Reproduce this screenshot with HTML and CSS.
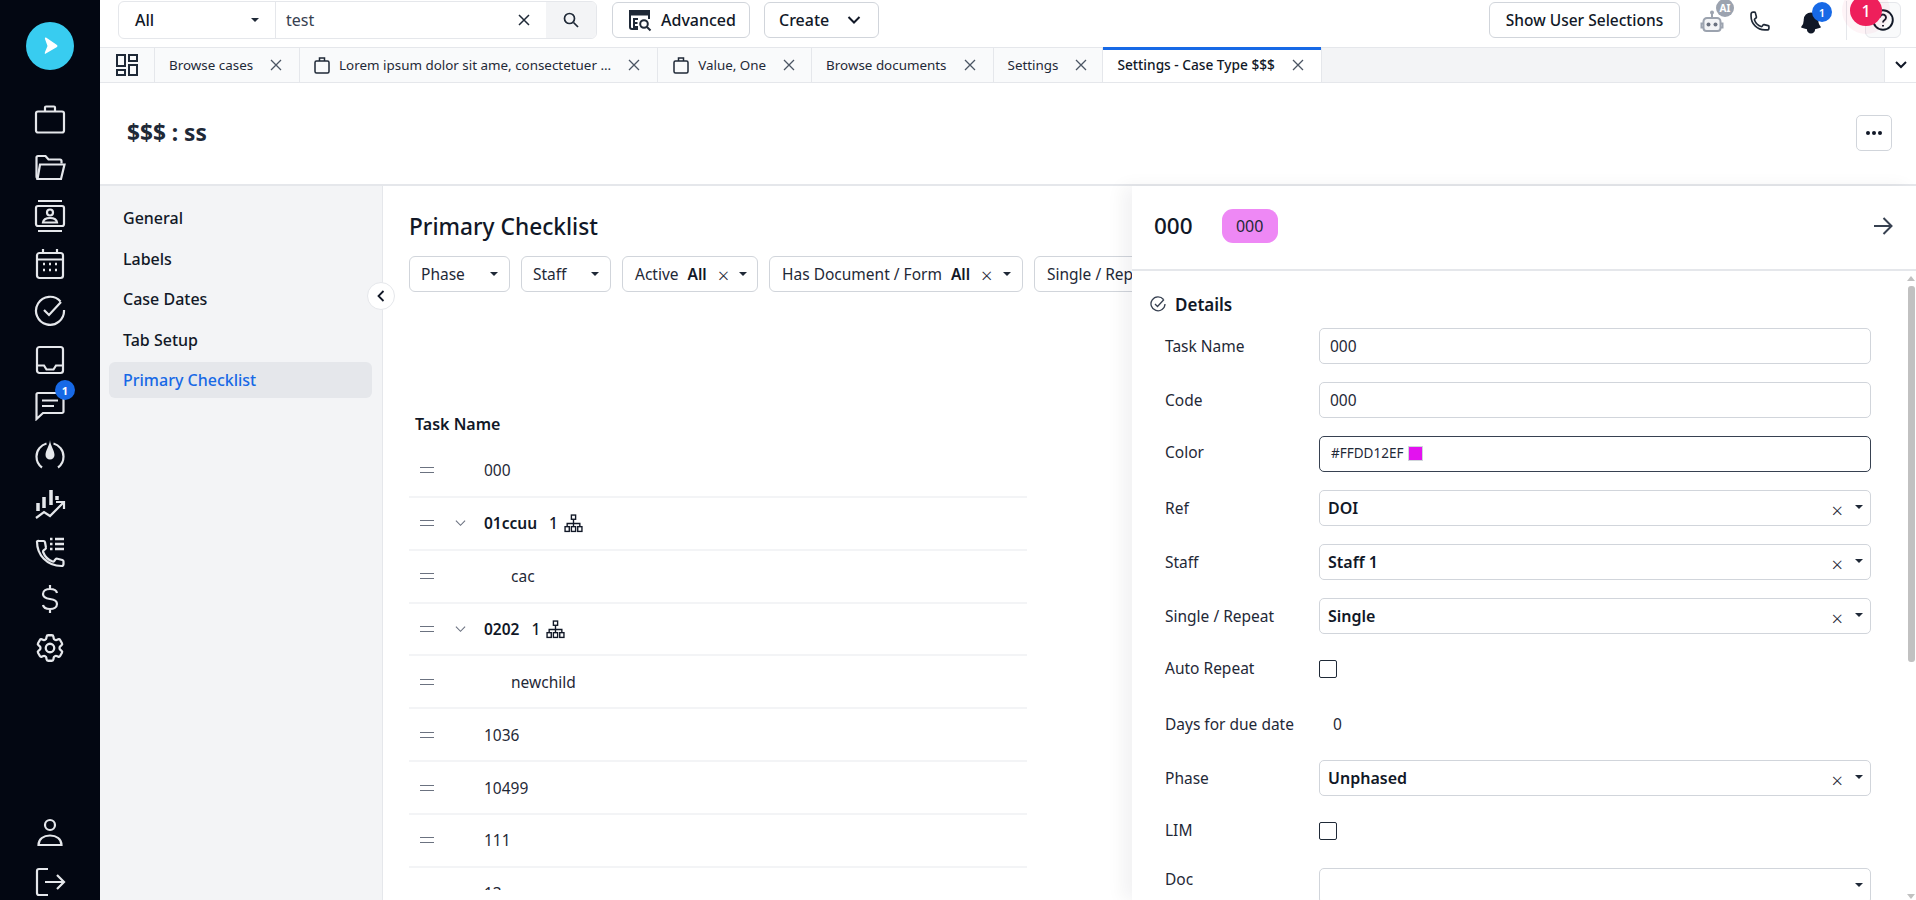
FILE: index.html
```html
<!DOCTYPE html>
<html lang="en">
<head>
<meta charset="utf-8">
<title>Settings - Case Type</title>
<link rel="stylesheet" href="styles.css">
</head>
<body>
<div class="app">
  <nav class="rail">
    <div class="rail-logo"><svg width="48" height="48" viewBox="0 0 48 48"><circle cx="24" cy="24" r="24" fill="#38ccf0"/><path d="M20 15.500 L31 23 Q32 24 31 25 L19 32 Q18.500 32 19 30 L21.500 24 L19 17 Q18.500 15 20 15.500Z" fill="#fff"/></svg></div>
    <div class="rail-top">
      <a class="rail-item"><svg class="ri" viewBox="0 0 32 32"><rect x="2" y="7.500" width="28" height="21" rx="2"/><path d="M11 7V3.500a1 1 0 0 1 1-1h8a1 1 0 0 1 1 1V7"/></svg></a>
      <a class="rail-item"><svg class="ri" viewBox="0 0 32 32"><path d="M5 27a2.500 2.500 0 0 1-2.500-2.500V5.500A1.500 1.500 0 0 1 4 4h7.500l3 3.500H26a1.500 1.500 0 0 1 1.500 1.500v2.500"/><path d="M6 12.500h24.500L27 27H3.500z"/></svg></a>
      <a class="rail-item"><svg class="ri" viewBox="0 0 32 32"><path d="M4 1h24M4 31h24"/><rect x="2" y="6" width="28" height="20" rx="2"/><circle cx="16" cy="12.500" r="3"/><path d="M9 22.500c.5-3.500 3-4.500 7-4.500s6.500 1 7 4.500z" /></svg></a>
      <a class="rail-item"><svg class="ri" viewBox="0 0 32 32"><rect x="3" y="5" width="26" height="25" rx="2.500"/><path d="M3 11.500h26M9 1v5M23 1v5"/><path class="dots" d="M9 16h2M15 16h2M21 16h2M9 22h2M15 22h2M21 22h2"/></svg></a>
      <a class="rail-item rail-up"><svg class="ri" viewBox="0 0 32 32"><path d="M26.500 7.500A14 14 0 1 0 30 16"/><path d="M10 16l5 5L27 8"/></svg></a>
      <a class="rail-item"><svg class="ri" viewBox="0 0 32 32"><rect x="3" y="3" width="26" height="26" rx="2.500"/><path d="M3 21.500h7l2.500 4h7l2.500-4h7"/></svg></a>
      <a class="rail-item rail-chat"><svg class="ri" viewBox="0 0 32 32"><path d="M4 4h24a1.500 1.500 0 0 1 1.500 1.500v17a1.500 1.500 0 0 1-1.500 1.500H9l-6.500 6V5.500A1.500 1.500 0 0 1 4 4z"/><path d="M8 11.500h16M8 17h12"/></svg><span class="rail-badge">1</span></a>
      <a class="rail-item rail-gauge"><svg class="ri" viewBox="0 0 32 32"><path d="M8 28.500C4.500 26 2.500 22 2.500 17.500 2.500 11 7 6 12.500 4.500M24 28.500c3.500-2.500 5.500-6.500 5.500-11C29.500 11 25 6 19.500 4.500"/><path class="fill" d="M16 1c.5 6 4.500 10 4.500 15a4.500 4.500 0 0 1-9 0C11.500 11 15.500 7 16 1z"/></svg></a>
      <a class="rail-item"><svg class="ri" viewBox="0 0 32 32"><path d="M4 15v8M10 9v11M17 2v15M23 8v4" stroke-width="3.500"/><path d="M2 30l8-6 6 4 13-13"/><path d="M22 14h8v7"/></svg></a>
      <a class="rail-item"><svg class="ri" viewBox="0 0 32 32"><path d="M3 5.500C3 19 13 30 27.500 30a2 2 0 0 0 2-2v-2.500a1.500 1.500 0 0 0-1.100-1.500l-5-1.300a2 2 0 0 0-2 .7l-1.200 1.600c-.4.500-1 .7-1.600.5-4.800-1.700-7.800-5-9.500-9.500-.2-.6 0-1.200.5-1.600l1.600-1.200a2 2 0 0 0 .7-2L11 6.200A1.500 1.500 0 0 0 9.500 5H5a2 2 0 0 0-2 .5z"/><path d="M16 3h2.500M16 8h2.500M16 13h2.500M21 3h9M21 8h9M21 13h9" stroke-width="2.500"/></svg></a>
      <a class="rail-item rail-dollar"><svg class="ri" viewBox="0 0 32 32"><path d="M16 2v4M16 26v4M23 10c-.5-2.500-3.500-4-7-4s-7 1.700-7 5 3 4.500 7 5 7 1.700 7 5-3.500 5-7 5-6.500-1.500-7-4"/></svg></a>
      <a class="rail-item"><svg class="ri ri-gear" viewBox="0 0 24 24"><path d="M9.594 3.940c.09-.542.56-.94 1.110-.94h2.593c.55 0 1.020.398 1.110.94l.213 1.281c.063.374.313.686.645.870.074.04.147.083.22.127.325.196.72.257 1.075.124l1.217-.456a1.125 1.125 0 0 1 1.370.49l1.296 2.247a1.125 1.125 0 0 1-.26 1.431l-1.003.827c-.293.241-.438.613-.43.992a7.723 7.723 0 0 1 0 .255c-.008.378.137.75.43.991l1.004.827c.424.35.534.955.26 1.430l-1.298 2.247a1.125 1.125 0 0 1-1.369.491l-1.217-.456c-.355-.133-.75-.072-1.076.124a6.470 6.470 0 0 1-.22.128c-.331.183-.581.495-.644.869l-.213 1.281c-.09.543-.56.94-1.110.94h-2.594c-.55 0-1.019-.398-1.110-.94l-.213-1.281c-.062-.374-.312-.686-.644-.870a6.520 6.520 0 0 1-.22-.127c-.325-.196-.72-.257-1.076-.124l-1.217.456a1.125 1.125 0 0 1-1.369-.49l-1.297-2.247a1.125 1.125 0 0 1 .26-1.431l1.004-.827c.292-.24.437-.613.43-.991a6.932 6.932 0 0 1 0-.255c.007-.38-.138-.751-.43-.992l-1.004-.827a1.125 1.125 0 0 1-.26-1.430l1.297-2.247a1.125 1.125 0 0 1 1.370-.491l1.216.456c.356.133.751.072 1.076-.124.072-.044.146-.086.22-.128.332-.183.582-.495.644-.869l.214-1.280Z"/><circle cx="12" cy="12" r="3"/></svg></a>
    </div>
    <div class="rail-bottom">
      <a class="rail-item-sm"><svg class="ri" viewBox="0 0 32 32"><circle cx="16" cy="8" r="5"/><path d="M4.500 28c0-6 5-9.500 11.500-9.500S27.500 22 27.500 28z"/></svg></a>
      <a class="rail-item-sm"><svg class="ri" viewBox="0 0 32 32"><path d="M14 3H5a2 2 0 0 0-2 2v22a2 2 0 0 0 2 2h9"/><path d="M11 16h19M23 9l7 7-7 7"/></svg></a>
    </div>
  </nav>

  <div class="main">
    <header class="topbar">
      <div class="search">
        <div class="search-scope"><span>All</span><i class="caret"></i></div>
        <div class="search-input"><span>test</span><svg class="ic-x" viewBox="0 0 12 12"><path d="M1 1l10 10M11 1L1 11"/></svg></div>
        <div class="search-go"><svg width="18" height="18" viewBox="0 0 18 18" fill="none" stroke="#1f2937" stroke-width="1.700"><circle cx="7.500" cy="7.500" r="5"/><path d="M11.500 11.500L16 16"/></svg></div>
      </div>
      <button class="btn btn-adv"><svg width="24" height="24" viewBox="0 0 24 24" fill="none" stroke="#1f2937" stroke-width="2"><path d="M10 21H4a2 2 0 0 1-2-2V3h19v8"/><path d="M2 5.500h19" stroke-width="4"/><path d="M10 11H6v8h4M6 15h3.500"/><circle cx="16" cy="16" r="3.800"/><path d="M19 19l3.500 3.500"/></svg><span>Advanced</span></button>
      <button class="btn btn-create"><span>Create</span><svg width="14" height="10" viewBox="0 0 14 10" fill="none" stroke="#111827" stroke-width="2"><path d="M1.500 2l5.500 5.500L12.500 2"/></svg></button>
      <div class="topbar-right">
        <button class="btn btn-user">Show User Selections</button>
        <span class="ti ti-robot"><svg width="24" height="23" viewBox="0 0 24 23"><circle cx="12" cy="2.500" r="2" fill="#9ca3af"/><path d="M12 4v4" stroke="#9ca3af" stroke-width="2"/><path d="M7 8h10a3.500 3.500 0 0 1 3.500 3.500V18a3 3 0 0 1-3 3h-11a3 3 0 0 1-3-3v-6.500A3.500 3.500 0 0 1 7 8z" fill="#f3f4f6" stroke="#9ca3af" stroke-width="2"/><path d="M3 13.500H1.500v4H3M21 13.500h1.500v4H21" fill="none" stroke="#9ca3af" stroke-width="2"/><circle cx="8.500" cy="14.500" r="2" fill="#6b7280"/><circle cx="15.500" cy="14.500" r="2" fill="#6b7280"/></svg><b class="ai">AI</b></span>
        <span class="ti ti-phone"><svg width="22" height="22" viewBox="0 0 24 24" fill="none" stroke="#1f2937" stroke-width="1.800"><path d="M2.250 6.750c0 8.284 6.716 15 15 15h2.250a2.250 2.250 0 0 0 2.250-2.250v-1.372c0-.516-.351-.966-.852-1.091l-4.423-1.106c-.44-.11-.902.055-1.173.417l-.97 1.293c-.282.376-.769.542-1.210.38a12.035 12.035 0 0 1-7.143-7.143c-.162-.441.004-.928.38-1.210l1.293-.97c.363-.271.527-.734.417-1.173L6.963 3.102a1.125 1.125 0 0 0-1.091-.852H4.500A2.250 2.250 0 0 0 2.250 4.500v2.250Z"/></svg></span>
        <span class="ti ti-bell"><svg width="26" height="26" viewBox="0 0 24 24" fill="#111827"><path d="M5.250 9a6.750 6.750 0 0 1 13.500 0v.75c0 2.123.8 4.057 2.118 5.520a.75.75 0 0 1-.297 1.206c-1.544.57-3.160.99-4.831 1.243a3.750 3.750 0 1 1-7.480 0 24.585 24.585 0 0 1-4.831-1.244.75.75 0 0 1-.298-1.205A8.217 8.217 0 0 0 5.250 9.750V9Z"/></svg><b class="bell-badge">1</b></span>
        <span class="tb-divider"></span>
        <button class="help"><svg width="24" height="24" viewBox="0 0 24 24" fill="none" stroke="#111827" stroke-width="1.900"><circle cx="12" cy="12" r="9.800"/><path d="M9 9.500a3 3 0 1 1 4.600 2.500c-1 .7-1.600 1.300-1.600 2.500"/><path d="M12 17v1.500"/></svg><b class="help-badge">1</b></button>
      </div>
    </header>

    <div class="tabs">
      <div class="tab-grid"><svg width="22" height="22" viewBox="0 0 22 22" fill="none" stroke="#1f2937" stroke-width="2"><rect x="1" y="1" width="8" height="11"/><rect x="13" y="1" width="8" height="6"/><rect x="1" y="16" width="8" height="5"/><rect x="13" y="11" width="8" height="10"/></svg></div>
      <div class="tab"><span>Browse cases</span><svg class="ic-x tx" viewBox="0 0 12 12"><path d="M1 1l10 10M11 1L1 11"/></svg></div>
      <div class="tab tab-long"><svg class="bag" width="16" height="18" viewBox="0 0 16 18"><rect x="1" y="5" width="14" height="12" rx="1.500"/><path d="M5.500 5V2h5v3"/></svg><span>Lorem ipsum dolor sit ame, consectetuer ...</span><svg class="ic-x tx" viewBox="0 0 12 12"><path d="M1 1l10 10M11 1L1 11"/></svg></div>
      <div class="tab tab-value"><svg class="bag" width="16" height="18" viewBox="0 0 16 18"><rect x="1" y="5" width="14" height="12" rx="1.500"/><path d="M5.500 5V2h5v3"/></svg><span>Value, One</span><svg class="ic-x tx" viewBox="0 0 12 12"><path d="M1 1l10 10M11 1L1 11"/></svg></div>
      <div class="tab"><span>Browse documents</span><svg class="ic-x tx" viewBox="0 0 12 12"><path d="M1 1l10 10M11 1L1 11"/></svg></div>
      <div class="tab tab-settings"><span>Settings</span><svg class="ic-x tx" viewBox="0 0 12 12"><path d="M1 1l10 10M11 1L1 11"/></svg></div>
      <div class="tab tab-active"><span>Settings - Case Type $$$</span><svg class="ic-x tx" viewBox="0 0 12 12"><path d="M1 1l10 10M11 1L1 11"/></svg></div>
      <div class="tabs-more"><svg width="14" height="10" viewBox="0 0 14 10" fill="none" stroke="#111827" stroke-width="2"><path d="M2 2l5 5 5-5"/></svg></div>
    </div>

    <div class="page-head">
      <h1>$$$ : ss</h1>
      <button class="dots-btn"><i></i><i></i><i></i></button>
    </div>

    <div class="page-body">
      <aside class="side">
        <a class="side-item">General</a>
        <a class="side-item">Labels</a>
        <a class="side-item">Case Dates</a>
        <a class="side-item">Tab Setup</a>
        <a class="side-item side-active">Primary Checklist</a>
        <button class="collapse"><svg width="8" height="12" viewBox="0 0 8 12" fill="none" stroke="#111827" stroke-width="1.800"><path d="M6.500 1L1.500 6l5 5"/></svg></button>
      </aside>

      <section class="content">
        <h2>Primary Checklist</h2>
        <div class="filters">
          <div class="filter f-phase"><span>Phase</span><i class="caret"></i></div>
          <div class="filter f-staff"><span>Staff</span><i class="caret"></i></div>
          <div class="filter f-active"><span>Active</span><b>All</b><em class="xx">×</em><i class="caret"></i></div>
          <div class="filter f-doc"><span>Has Document / Form</span><b>All</b><em class="xx">×</em><i class="caret"></i></div>
          <div class="filter f-single"><span>Single / Repeat</span><i class="caret"></i></div>
        </div>
        <div class="th">Task Name</div>
        <div class="rows">
          <div class="row"><i class="drag"></i><span class="lead"></span><span>000</span></div>
          <div class="row row-b"><i class="drag"></i><svg class="chev" viewBox="0 0 12 8"><path d="M1 1.500l5 5 5-5"/></svg><span>01ccuu</span><span class="cnt">1</span><svg class="tree" viewBox="0 0 18 18"><rect x="7" y="1" width="4" height="4"/><path d="M9 5v4M3 12V9h12v3M9 9v3"/><rect x="1" y="12" width="4" height="4.500"/><rect x="7" y="12" width="4" height="4.500"/><rect x="13" y="12" width="4" height="4.500"/></svg></div>
          <div class="row"><i class="drag"></i><span class="lead lead-c"></span><span>cac</span></div>
          <div class="row row-b"><i class="drag"></i><svg class="chev" viewBox="0 0 12 8"><path d="M1 1.500l5 5 5-5"/></svg><span>0202</span><span class="cnt">1</span><svg class="tree" viewBox="0 0 18 18"><rect x="7" y="1" width="4" height="4"/><path d="M9 5v4M3 12V9h12v3M9 9v3"/><rect x="1" y="12" width="4" height="4.500"/><rect x="7" y="12" width="4" height="4.500"/><rect x="13" y="12" width="4" height="4.500"/></svg></div>
          <div class="row"><i class="drag"></i><span class="lead lead-c"></span><span>newchild</span></div>
          <div class="row"><i class="drag"></i><span class="lead"></span><span>1036</span></div>
          <div class="row"><i class="drag"></i><span class="lead"></span><span>10499</span></div>
          <div class="row"><i class="drag"></i><span class="lead"></span><span>111</span></div>
          <div class="row"><i class="drag"></i><span class="lead"></span><span>13</span></div>
        </div>
      </section>
    </div>

    <aside class="panel">
      <div class="panel-head">
        <span class="panel-title">000</span>
        <span class="chip">000</span>
        <svg class="panel-arrow" width="20" height="18" viewBox="0 0 20 18" fill="none" stroke="#374151" stroke-width="2"><path d="M1 9h17M10.500 1L18.500 9l-8 8"/></svg>
      </div>
      <div class="panel-body">
        <div class="details-head"><svg width="16" height="16" viewBox="0 0 16 16" fill="none" stroke="#374151" stroke-width="1.300"><path d="M13.500 3.500A7 7 0 1 0 15 8"/><path d="M5 8l2.500 2.500L14 3.500"/></svg><span>Details</span></div>
        <div class="form">
          <label class="f-label">Task Name</label><div class="ctl">000</div>
          <label class="f-label">Code</label><div class="ctl">000</div>
          <label class="f-label f-up">Color</label><div class="ctl ctl-color"><span>#FFDD12EF</span><i class="swatch"></i></div>
          <label class="f-label">Ref</label><div class="ctl ctl-sel"><b>DOI</b><em class="xx">×</em><i class="caret"></i></div>
          <label class="f-label">Staff</label><div class="ctl ctl-sel"><b>Staff 1</b><em class="xx">×</em><i class="caret"></i></div>
          <label class="f-label">Single / Repeat</label><div class="ctl ctl-sel"><b>Single</b><em class="xx">×</em><i class="caret"></i></div>
          <label class="f-label f-up">Auto Repeat</label><div class="ctl-plain"><i class="check"></i></div>
          <label class="f-label">Days for due date</label><div class="ctl-plain ctl-days">0</div>
          <label class="f-label">Phase</label><div class="ctl ctl-sel"><b>Unphased</b><em class="xx">×</em><i class="caret"></i></div>
          <label class="f-label f-up">LIM</label><div class="ctl-plain"><i class="check"></i></div>
          <label class="f-label f-doc-label">Doc</label><div class="ctl ctl-sel"><b></b><i class="caret"></i></div>
        </div>
      </div>
      <div class="scrollbar"><i class="sb-up"></i><i class="sb-thumb"></i><i class="sb-down"></i></div>
    </aside>
  </div>
</div>
</body>
</html>
```

FILE: styles.css
```css
* { box-sizing: border-box; }
html, body { margin: 0; height: 100%; overflow: hidden; }
body { font-family: "Noto Sans", "Open Sans", sans-serif; font-size: 15.500px; color: #111827; background: #fff; }
button { font: inherit; color: inherit; background: #fff; cursor: pointer; }
em { font-style: normal; }
.app { display: flex; width: 1916px; height: 900px; overflow: hidden; }

/* rail */
.rail { width: 100px; flex: none; background: #030712; display: flex; flex-direction: column; align-items: center; padding-top: 22px; }
.rail-logo { height: 48px; margin-bottom: 26px; }
.rail-top { display: flex; flex-direction: column; }
.rail-item { height: 48px; width: 48px; display: flex; align-items: center; justify-content: center; position: relative; }
.rail-up { padding-bottom: 5px; }
.rail-chat { padding-bottom: 6px; }
.rail-gauge { padding-bottom: 2px; }
.rail-dollar { padding-bottom: 2px; }
.rail-bottom { margin-top: auto; display: flex; flex-direction: column; gap: 13px; }
.rail-item-sm { height: 36px; width: 48px; display: flex; align-items: center; justify-content: center; }
.ri { width: 32px; height: 32px; fill: none; stroke: #e5e7eb; stroke-width: 2.200; }
.ri .dots { stroke-width: 2.400; }
.ri .fill { fill: #e5e7eb; stroke: none; }
.ri-gear { stroke-width: 1.600; width: 34px; height: 34px; }
.rail-badge { position: absolute; left: 29px; top: -4px; width: 20px; height: 20px; border-radius: 50%; background: #1769e6; color: #fff; font-size: 11px; font-weight: 700; display: flex; align-items: center; justify-content: center; }

/* main */
.main { flex: 1; min-width: 0; position: relative; display: flex; flex-direction: column; }

/* topbar */
.topbar { height: 47px; flex: none; display: flex; align-items: flex-start; padding: 1px 15px 0 18px; font-size: 16px; }
.search { display: flex; width: 479px; height: 38px; border: 1px solid #e5e7eb; border-radius: 6px; overflow: hidden; }
.search-scope { width: 157px; display: flex; align-items: center; justify-content: space-between; padding: 0 16px 0 16px; border-right: 1px solid #e5e7eb; font-weight: 500; }
.search-input { flex: 1; display: flex; align-items: center; justify-content: space-between; padding: 0 16px 0 10px; color: #374151; }
.search-go { width: 50px; background: #f3f4f6; display: flex; align-items: center; justify-content: center; }
.ic-x { width: 12px; height: 12px; fill: none; stroke: #1f2937; stroke-width: 1.500; }
.caret { display: inline-block; width: 0; height: 0; border-left: 4px solid transparent; border-right: 4px solid transparent; border-top: 4px solid #1f2937; flex: none; }
.btn { height: 36px; margin-top: 1px; border: 1px solid #d1d5db; border-radius: 6px; display: flex; align-items: center; padding: 0; font-weight: 500; }
.btn-adv { width: 138px; margin-left: 15px; padding-left: 15px; gap: 9px; }
.btn-create { width: 115px; margin-left: 14px; padding-left: 14px; gap: 18px; }
.topbar-right { margin-left: auto; display: flex; align-items: flex-start; position: relative; }
.btn-user { width: 191px; justify-content: center; font-size: 15.500px; }
.ti { position: relative; display: block; margin-top: 9px; }
.ti svg { display: block; }
.ti-robot { margin-left: 20px; }
.ai { position: absolute; left: 16px; top: -11px; width: 18px; height: 18px; border-radius: 50%; background: #9ca3af; color: #fff; font-size: 10px; display: flex; align-items: center; justify-content: center; }
.ti-phone { margin-left: 25px; }
.ti-bell { margin-left: 27px; }
.bell-badge { position: absolute; left: 14px; top: -8px; width: 20px; height: 20px; border-radius: 50%; background: #1769e6; color: #fff; font-size: 11px; display: flex; align-items: center; justify-content: center; font-weight: 600; }
.tb-divider { width: 1px; height: 39px; background: #e5e7eb; margin-left: 22px; }
.help { width: 36px; height: 36px; margin: 1px 0 0 18px; border: 1px solid #e5e7eb; border-radius: 6px; background: #f9fafb; padding: 0; position: relative; display: flex; align-items: center; justify-content: center; }
.help-badge { position: absolute; left: -16px; top: -8px; width: 32px; height: 31px; border-radius: 50%; background: #ee1f5b; color: #fff; font-size: 16px; font-weight: 500; display: flex; align-items: center; justify-content: center; box-shadow: 0 0 0 8px rgba(238, 31, 91, .05); }

/* tabs */
.tabs { height: 36px; flex: none; display: flex; background: #f3f4f6; border-top: 1px solid #e5e7eb; border-bottom: 1px solid #e5e7eb; font-size: 13.400px; color: #1f2937; }
.tab-grid { width: 55px; display: flex; align-items: center; justify-content: center; background: #f9fafb; border-right: 1px solid #e5e7eb; }
.tab { display: flex; align-items: center; padding: 0 17px 0 14px; background: #f9fafb; border-right: 1px solid #e5e7eb; white-space: nowrap; }
.tab-value { padding-left: 15px; padding-right: 16px; }
.tab-settings { padding-right: 15px; }
.tx { margin-left: 17px; stroke: #4b5563; stroke-width: 1.300; }
.bag { margin-right: 9px; fill: none; stroke: #1f2937; stroke-width: 1.500; }
.tab-active { background: #fff; box-shadow: inset 0 3px 0 #1769e6; margin-top: -1px; font-weight: 500; color: #111827; font-size: 13.700px; }
.tabs-more { margin-left: auto; width: 32px; background: #fff; border-left: 1px solid #e5e7eb; display: flex; align-items: center; justify-content: center; }

/* page head */
.page-head { height: 103px; flex: none; display: flex; align-items: center; justify-content: space-between; padding: 0 24px 2px 27px; border-bottom: 2px solid #e5e7eb; }
.page-head h1 { margin: 0; font-size: 22.700px; font-weight: 700; color: #1f2937; }
.dots-btn { width: 36px; height: 36px; border: 1px solid #d1d5db; border-radius: 5px; display: flex; gap: 2px; align-items: center; justify-content: center; padding: 0; }
.dots-btn i { width: 4px; height: 4px; border-radius: 50%; background: #111827; }

/* body */
.page-body { flex: 1; min-height: 0; display: flex; }
.side { width: 283px; flex: none; background: #f3f4f6; border-right: 1px solid #e5e7eb; padding: 12px 10px 0 9px; position: relative; font-size: 16px; }
.side-item { display: flex; align-items: center; height: 40.500px; padding-left: 14px; font-weight: 500; color: #111827; }
.side-active { height: 36px; margin-top: 2px; background: #e5e7eb; border-radius: 6px; color: #1769e6; }
.collapse { position: absolute; right: -13px; top: 96px; width: 28px; height: 28px; border-radius: 50%; border: 1px solid #e5e7eb; padding: 0; display: flex; align-items: center; justify-content: center; z-index: 2; }

.content { flex: 1; min-width: 0; padding: 25px 0 0 26px; height: 704px; overflow: hidden; }
.content h2 { margin: 0; font-size: 22.700px; line-height: 32px; font-weight: 500; color: #111827; }
.filters { display: flex; gap: 11px; margin-top: 13px; white-space: nowrap; }
.filter { height: 36px; border: 1px solid #d1d5db; border-radius: 6px; display: flex; align-items: center; padding: 0 11px 0 12px; color: #1f2937; }
.filter b { font-weight: 600; color: #111827; margin-left: 9px; }
.filter .xx { margin-left: 11px; top: 2px; }
.filter .caret { margin-left: 10px; }
.f-phase { width: 101px; justify-content: space-between; padding-left: 11px; }
.f-staff { width: 90px; justify-content: space-between; padding-left: 11px; }
.f-active { width: 136px; }
.f-doc { width: 254px; }
.f-single { width: 150px; justify-content: space-between; }
.xx { font-size: 20px; line-height: 1; color: #1f2937; position: relative; top: 3px; font-weight: 300; }
.th { margin: 122px 0 0 6px; height: 21px; line-height: 21px; font-weight: 600; font-size: 16px; color: #111827; }
.rows { width: 618px; margin-top: 10px; }
.row { height: 52.860px; border-bottom: 2px solid #f3f4f6; display: flex; align-items: center; padding-left: 11px; color: #1f2937; }
.row-b { font-weight: 600; color: #111827; }
.drag { width: 14px; height: 6px; border-top: 1.500px solid #6b7280; border-bottom: 1.500px solid #6b7280; flex: none; margin-right: 21px; }
.lead { width: 29px; flex: none; }
.lead-c { width: 56px; }
.chev { width: 11px; height: 8px; margin-right: 18px; fill: none; stroke: #6b7280; stroke-width: 1.200; flex: none; }
.cnt { margin-left: 12px; font-weight: 500; }
.tree { width: 19px; height: 19px; margin-left: 6px; fill: none; stroke: #111827; stroke-width: 1.300; }

/* panel */
.panel { position: absolute; left: 1032px; right: 0; top: 186px; bottom: 0; background: #fff; box-shadow: -10px 0 16px rgba(17, 24, 39, .05); z-index: 3; overflow: hidden; }
.panel-head { height: 85px; display: flex; align-items: center; padding: 0 23px 4px 22px; border-bottom: 2px solid #e5e7eb; }
.panel-title { font-size: 22.500px; font-weight: 500; }
.chip { margin-left: 29px; width: 56px; height: 34px; background: #ee88f5; border-radius: 11px; display: flex; align-items: center; justify-content: center; font-size: 16px; color: #1f2937; }
.panel-arrow { margin-left: auto; }
.panel-body { padding: 21px 46px 0 18px; }
.details-head { display: flex; align-items: center; gap: 9px; height: 24px; font-size: 17px; font-weight: 600; color: #111827; }
.form { display: grid; grid-template-columns: 154px 552px; grid-auto-rows: 36px; row-gap: 18px; margin-top: 12px; padding-left: 15px; align-items: center; }
.f-label { color: #1f2937; }
.f-up { margin-bottom: 4px; }
.f-doc-label { margin-bottom: 14px; }
.ctl { height: 36px; border: 1px solid #d1d5db; border-radius: 5px; display: flex; align-items: center; padding: 0 3px 0 10px; color: #1f2937; }
.ctl-color { border-color: #374151; padding: 0 0 2px 11px; font-size: 13.500px; gap: 6px; }
.swatch { width: 13px; height: 13px; background: #e312ef; outline: 1px solid #d1d5db; }
.ctl-sel { padding-left: 8px; }
.ctl-sel b { flex: 1; font-weight: 600; color: #111827; font-size: 16px; }
.ctl-sel .caret { margin-left: 12px; margin-right: 4px; position: relative; top: -1px; }
.ctl-plain { display: flex; align-items: center; height: 36px; }
.ctl-days { padding-left: 14px; color: #1f2937; }
.check { width: 18px; height: 18px; border: 1.500px solid #1f2937; border-radius: 2px; margin-bottom: 2px; }
.scrollbar { position: absolute; right: 0; top: 90px; bottom: 0; width: 10px; display: flex; flex-direction: column; align-items: center; }
.sb-up { width: 0; height: 0; border-left: 4px solid transparent; border-right: 4px solid transparent; border-bottom: 5px solid #c1c1c1; margin-bottom: 5px; }
.sb-thumb { width: 7px; height: 376px; background: #c1c1c1; border-radius: 3px; }
.sb-down { margin-top: auto; margin-bottom: 1px; width: 0; height: 0; border-left: 4px solid transparent; border-right: 4px solid transparent; border-top: 5px solid #c1c1c1; }
```
